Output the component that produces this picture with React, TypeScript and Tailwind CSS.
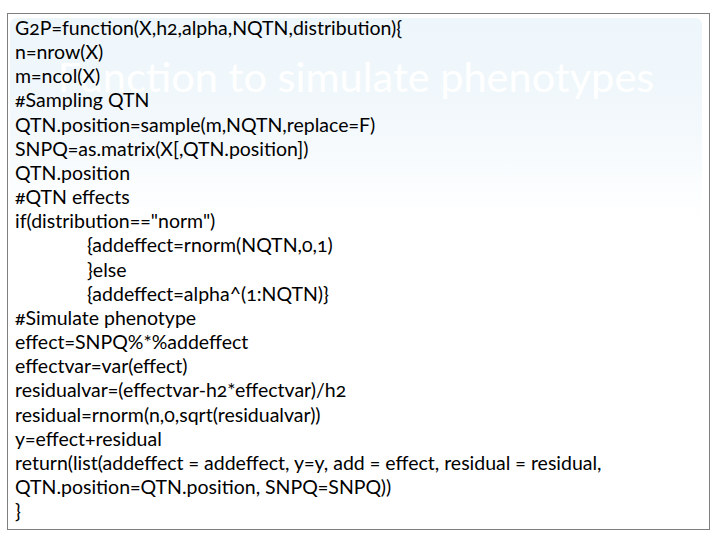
import React from "react";

const lines: { t: string; indent?: boolean }[] = [
  { t: "G2P=function(X,h2,alpha,NQTN,distribution){" },
  { t: "n=nrow(X)" },
  { t: "m=ncol(X)" },
  { t: "#Sampling QTN" },
  { t: "QTN.position=sample(m,NQTN,replace=F)" },
  { t: "SNPQ=as.matrix(X[,QTN.position])" },
  { t: "QTN.position" },
  { t: "#QTN effects" },
  { t: 'if(distribution=="norm")' },
  { t: "{addeffect=rnorm(NQTN,0,1)", indent: true },
  { t: "}else", indent: true },
  { t: "{addeffect=alpha^(1:NQTN)}", indent: true },
  { t: "#Simulate phenotype" },
  { t: "effect=SNPQ%*%addeffect" },
  { t: "effectvar=var(effect)" },
  { t: "residualvar=(effectvar-h2*effectvar)/h2" },
  { t: "residual=rnorm(n,0,sqrt(residualvar))" },
  { t: "y=effect+residual" },
  { t: "return(list(addeffect = addeffect, y=y, add = effect, residual = residual," },
  { t: "QTN.position=QTN.position, SNPQ=SNPQ))" },
  { t: "}" },
];

export default function App() {
  return (
    <div className="relative w-[720px] h-[540px] bg-white overflow-hidden">
      <div className="absolute left-[10px] top-[18px] w-[692px] h-[200px] rounded-md bg-gradient-to-b from-[#edf6fb] via-[#f2f8fc] to-white flex justify-center pt-[30px]">
        <span className="text-white text-[41.5px] leading-[56px] font-['Lato',sans-serif]">
          Function to simulate phenotypes
        </span>
      </div>
      <div className="relative ml-[7px] mt-[13px] w-[703px] h-[517px] border-[1.5px] border-[#7f7f7f] pl-[7px] pt-[2px]">
        <div className="font-['Lato',sans-serif] oldstyle-nums text-[19.5px] leading-[24.15px] text-black">
          {lines.map((l, i) => (
            <div key={i} className={l.indent ? "pl-[72px] whitespace-pre" : "whitespace-pre"}>
              {l.t}
            </div>
          ))}
        </div>
      </div>
    </div>
  );
}
